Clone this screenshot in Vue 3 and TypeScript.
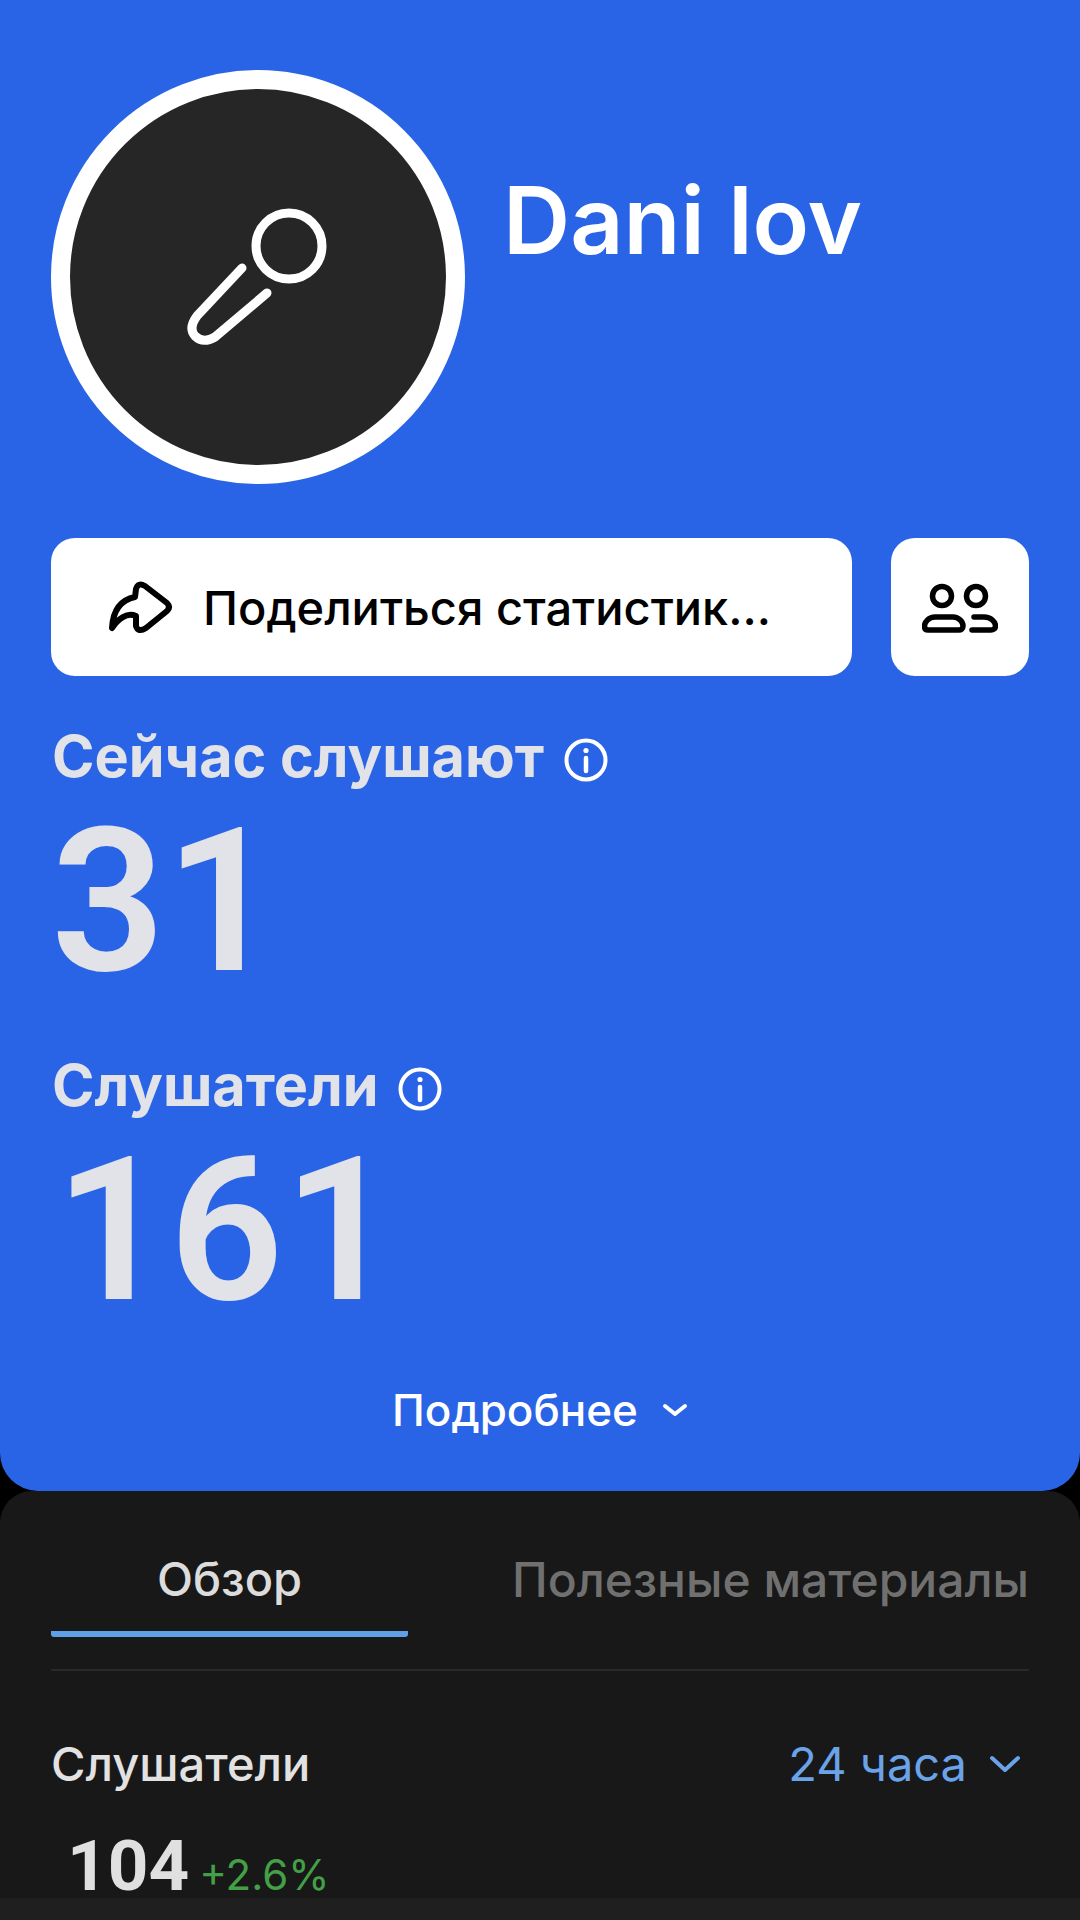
<script setup lang="ts">
const stats = [
  { label: 'Сейчас слушают', value: '31', cls: 'now' },
  { label: 'Слушатели', value: '161', cls: 'total' },
]
</script>

<template>
  <div class="screen">
    <section class="hero">
      <div class="profile">
        <div class="avatar">
          <svg class="mic" viewBox="0 0 180 180" width="180" height="180" fill="none" stroke="#fff" stroke-width="9" stroke-linecap="round">
            <circle cx="119" cy="56" r="33" />
            <path d="M72 78 L27 126 Q18 138 25 146 Q33 154 45 147 L97 103" />
          </svg>
        </div>
        <h1 class="name">Dani lov</h1>
      </div>

      <div class="actions">
        <button class="btn share">
          <svg viewBox="108 578 66 60" width="66" height="60" fill="none" stroke="#000" stroke-width="6" stroke-linejoin="round" stroke-linecap="round">
            <path d="M112 629 C113 612 120 601 135 598 L136 590 Q138 583 145 587 L167 604 Q171 608 167 612 L146 629 Q138 634 136 627 L136 617 C127 613 118 620 112 629 Z" />
          </svg>
          <span class="share-text">Поделиться статистик...</span>
        </button>
        <button class="btn people">
          <svg viewBox="0 0 76 52" width="76" height="52" fill="none" stroke="#000" stroke-width="5.5" stroke-linecap="round">
            <circle cx="20" cy="15" r="9.500" />
            <circle cx="54" cy="15" r="9.500" />
            <path d="M13 36 H31 C37 36 41 41 41 45 C41 48 39 49 37 49 H6 C4 49 2.500 48 2.500 45 C2.500 41 7 36 13 36 Z" />
            <path d="M52 36 H62 C69 36 73.500 41 73.500 45 C73.500 48 71 49 69 49 H50" />
          </svg>
        </button>
      </div>

      <div v-for="s in stats" :key="s.cls" class="stat" :class="s.cls">
        <div class="stat-label">
          <span>{{ s.label }}</span>
          <svg class="info" viewBox="0 0 44 44" width="44" height="44" fill="none" stroke="#fff" stroke-width="4">
            <circle cx="22" cy="22" r="19.500" />
            <path d="M22 20 V33" stroke-width="4.500" stroke-linecap="round" />
            <circle cx="22" cy="12.500" r="2.600" fill="#fff" stroke="none" />
          </svg>
        </div>
        <div class="stat-value">{{ s.value }}</div>
      </div>

      <div class="more">
        <span>Подробнее</span>
        <svg viewBox="0 0 26 16" width="26" height="16" fill="none" stroke="#fff" stroke-width="4" stroke-linecap="round" stroke-linejoin="round">
          <path d="M3 4 L13 12 L23 4" />
        </svg>
      </div>
    </section>

    <section class="panel">
      <div class="tabs">
        <div class="tab active">Обзор</div>
        <div class="tab">Полезные материалы</div>
      </div>
      <div class="chart-head">
        <span class="chart-title">Слушатели</span>
        <span class="range">
          24 часа
          <svg viewBox="0 0 32 20" width="32" height="20" fill="none" stroke="#6ba3e8" stroke-width="4" stroke-linecap="round" stroke-linejoin="round">
            <path d="M3 4 L16 16 L29 4" />
          </svg>
        </span>
      </div>
      <div class="chart-value">
        <span class="big">104</span>
        <span class="delta">+2.6%</span>
      </div>
    </section>

    <div class="navbar"></div>
  </div>
</template>

<style scoped>
.screen {
  width: 1080px;
  height: 1920px;
  background: #000;
  display: flex;
  flex-direction: column;
  overflow: hidden;
  font-family: Inter, Roboto, sans-serif;
}

.hero {
  height: 1491px;
  flex: none;
  box-sizing: border-box;
  padding: 70px 51px 0;
  background: #2a64e6;
  border-radius: 0 0 38px 38px;
}

.profile {
  display: flex;
  align-items: flex-start;
  gap: 38px;
}

.avatar {
  width: 414px;
  height: 414px;
  box-sizing: border-box;
  flex: none;
  border: 19px solid #fff;
  border-radius: 50%;
  background: #262626;
  position: relative;
}

.mic {
  position: absolute;
  left: 100px;
  top: 101px;
}

.name {
  margin: 95px 0 0;
  font-size: 93px;
  line-height: 1.2;
  font-weight: 600;
  color: #fff;
}

.actions {
  display: flex;
  gap: 39px;
  margin-top: 54px;
}

.btn {
  height: 138px;
  border: 0;
  background: #fff;
  border-radius: 24px;
  display: flex;
  align-items: center;
  font-family: inherit;
  color: #000;
  padding: 0;
}

.share {
  width: 801px;
  padding-left: 57px;
  gap: 29px;
}

.share-text {
  font-size: 47px;
  font-weight: 500;
}

.people {
  width: 138px;
  justify-content: center;
}

.stat-label {
  display: flex;
  align-items: center;
  gap: 20px;
  font-size: 57.500px;
  font-weight: 700;
  line-height: 64px;
  color: #e1e3e9;
  margin-left: 1px;
}

.info {
  margin-top: 8px;
}

.stat-value {
  font-family: Roboto, sans-serif;
  font-size: 200px;
  font-weight: 600;
  line-height: 200px;
  color: #e1e3e9;
  margin-top: 14px;
}

.now {
  margin-top: 48px;
}

.total {
  margin-top: 51px;
}

.total .stat-value {
  margin-left: 4px;
}

.more {
  margin-top: 52px;
  display: flex;
  justify-content: center;
  align-items: center;
  gap: 24px;
  font-size: 44px;
  font-weight: 500;
  color: #fff;
}

.panel {
  flex: none;
  height: 407px;
  box-sizing: border-box;
  background: #181818;
  border-radius: 32px 32px 0 0;
  padding: 0 51px;
}

.tabs {
  display: flex;
  justify-content: space-between;
  border-bottom: 2px solid #2a2a2a;
  height: 180px;
  box-sizing: border-box;
}

.tab {
  font-size: 48px;
  font-weight: 500;
  color: #707070;
  padding-top: 59px;
}

.tab.active {
  width: 357px;
  height: 146px;
  box-sizing: border-box;
  text-align: center;
  font-size: 47px;
  color: #dcdcdc;
  border-bottom: 6px solid #5f9fe8;
  border-radius: 0 0 3px 3px;
}

.chart-head {
  display: flex;
  justify-content: space-between;
  align-items: center;
  margin-top: 64px;
}

.chart-title {
  font-size: 47px;
  font-weight: 500;
  color: #e2e2e2;
}

.range {
  display: flex;
  align-items: center;
  gap: 22px;
  font-size: 47px;
  color: #6ba3e8;
  padding-right: 8px;
}

.chart-value {
  display: flex;
  align-items: baseline;
  gap: 10px;
  margin: 44px 0 0 16px;
  line-height: 60px;
}

.big {
  font-family: Roboto, sans-serif;
  font-size: 71px;
  font-weight: 700;
  color: #e0e0e0;
}

.delta {
  font-size: 42px;
  color: #43a047;
}

.navbar {
  flex: 1;
  background: #1f1f1f;
}
</style>

<style>
html,
body {
  background: #000;
}
</style>
